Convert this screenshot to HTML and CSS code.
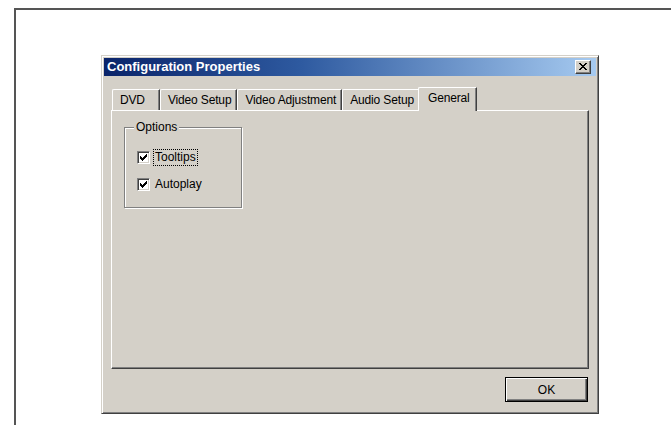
FILE: index.html
```html
<!DOCTYPE html>
<html lang="en">
<head>
<meta charset="utf-8">
<title>Configuration Properties</title>
<link rel="stylesheet" href="styles.css">
</head>
<body>
<div class="frame">
  <div class="dialog">
    <div class="titlebar">
      <span class="title">Configuration Properties</span>
      <button class="close" type="button" aria-label="Close">
        <svg width="8" height="7" viewBox="0 0 8 7" shape-rendering="crispEdges">
          <path fill="#000" d="M0 0h2v1H0z M6 0h2v1H6z M1 1h2v1H1z M5 1h2v1H5z M2 2h4v1H2z M3 3h2v1H3z M2 4h4v1H2z M1 5h2v1H1z M5 5h2v1H5z M0 6h2v1H0z M6 6h2v1H6z"/>
        </svg>
      </button>
    </div>

    <div class="tabs">
      <div class="tab tab-wide">DVD</div>
      <div class="tab">Video Setup</div>
      <div class="tab">Video Adjustment</div>
      <div class="tab">Audio Setup</div>
      <div class="tab tab-active">General</div>
    </div>

    <div class="panel">
      <div class="group">
        <span class="group-title">Options</span>
        <label class="option">
          <span class="check">
            <svg width="7" height="7" viewBox="0 0 7 7" shape-rendering="crispEdges">
              <path fill="#000" d="M6 0h1v1H6z M5 1h2v1H5z M0 2h1v1H0z M4 2h3v1H4z M0 3h2v1H0z M3 3h3v1H3z M0 4h5v1H0z M1 5h3v1H1z M2 6h1v1H2z"/>
            </svg>
          </span>
          <span class="option-text focused">Tooltips</span>
        </label>
        <label class="option">
          <span class="check">
            <svg width="7" height="7" viewBox="0 0 7 7" shape-rendering="crispEdges">
              <path fill="#000" d="M6 0h1v1H6z M5 1h2v1H5z M0 2h1v1H0z M4 2h3v1H4z M0 3h2v1H0z M3 3h3v1H3z M0 4h5v1H0z M1 5h3v1H1z M2 6h1v1H2z"/>
            </svg>
          </span>
          <span class="option-text">Autoplay</span>
        </label>
      </div>
    </div>

    <div class="actions">
      <button class="btn btn-default" type="button">OK</button>
    </div>
  </div>
</div>
</body>
</html>
```

FILE: styles.css
```css
html, body {
  margin: 0;
  height: 100%;
  background: #fff;
  overflow: hidden;
}

body {
  font-family: "Liberation Sans", Arial, sans-serif;
  font-size: 12px;
  color: #000;
}

.frame {
  margin: 8px 0 0 14px;
  height: calc(100% - 8px);
  box-sizing: border-box;
  border-top: 2px solid #555;
  border-left: 2px solid #555;
  padding: 45px 0 0 85px;
}

/* classic 3D dialog window */
.dialog {
  width: 498px;
  height: 359px;
  box-sizing: border-box;
  background: #d4d0c8;
  border: 1px solid;
  border-color: #d4d0c8 #404040 #404040 #d4d0c8;
  box-shadow: inset 1px 1px #fff, inset -1px -1px #808080;
  padding: 2px;
  display: flex;
  flex-direction: column;
}

.titlebar {
  height: 18px;
  flex: none;
  display: flex;
  align-items: center;
  justify-content: space-between;
  padding: 0 5px 0 3px;
  background: linear-gradient(to right, #0a246a 0%, #2e5aa0 40%, #a6caf0 100%);
}

.title {
  color: #fff;
  font-weight: bold;
  font-size: 13px;
  line-height: 18px;
  white-space: nowrap;
}

.close {
  width: 16px;
  height: 14px;
  box-sizing: border-box;
  padding: 0;
  margin: 0;
  background: #d4d0c8;
  border: 1px solid;
  border-color: #fff #404040 #404040 #fff;
  box-shadow: inset -1px -1px #808080;
  display: flex;
  align-items: center;
  justify-content: center;
}

.close svg {
  display: block;
  margin-top: -1px;
}

/* tab strip */
.tabs {
  margin: 11px 7px 0 7px;
  padding-left: 1px;
  height: 23px;
  flex: none;
  display: flex;
  align-items: flex-end;
}

.tab {
  height: 21px;
  box-sizing: border-box;
  padding: 0 5px 0 7px;
  display: flex;
  align-items: center;
  white-space: nowrap;
  letter-spacing: -0.15px;
  border-top: 1px solid #fff;
  border-left: 1px solid #fff;
  border-right: 1px solid #404040;
  border-top-left-radius: 2px;
  box-shadow: inset -1px 0 #808080;
  background: #d4d0c8;
}

.tab-wide {
  padding-right: 14px;
}

.tab-active {
  position: relative;
  z-index: 1;
  height: 24px;
  margin: 0 -2px -1px -2px;
  padding: 0 6px 3px 9px;
}

/* tab page */
.panel {
  margin: 0 7px;
  height: 259px;
  flex: none;
  box-sizing: border-box;
  border: 1px solid;
  border-color: #fff #404040 #404040 #fff;
  box-shadow: inset -1px -1px #808080;
  padding: 16px 0 0 12px;
}

/* etched group box */
.group {
  position: relative;
  width: 118px;
  height: 81px;
  box-sizing: border-box;
  border: 1px solid #808080;
  box-shadow: inset 1px 1px #fff, 1px 1px #fff;
  padding: 21px 0 0 12px;
  display: flex;
  flex-direction: column;
  gap: 10px;
}

.group-title {
  position: absolute;
  top: -8px;
  left: 9px;
  padding: 0 2px;
  line-height: 14px;
  background: #d4d0c8;
}

.option {
  height: 17px;
  display: flex;
  align-items: center;
  gap: 3px;
}

.check {
  width: 13px;
  height: 13px;
  box-sizing: border-box;
  flex: none;
  background: #fff;
  border: 1px solid;
  border-color: #808080 #fff #fff #808080;
  box-shadow: inset 1px 1px #404040, inset -1px -1px #d4d0c8;
  display: flex;
  align-items: center;
  justify-content: center;
}

.check svg {
  display: block;
}

.option-text {
  padding: 0 1px;
  line-height: 15px;
  border: 1px solid transparent;
}

.option-text.focused {
  border: 1px dotted #000;
}

/* dialog buttons */
.actions {
  margin: 8px 7px 0 7px;
  display: flex;
  justify-content: flex-end;
  padding-right: 1px;
}

.btn {
  width: 83px;
  height: 25px;
  box-sizing: border-box;
  margin: 0;
  padding: 0;
  font-family: "Liberation Sans", Arial, sans-serif;
  font-size: 12px;
  color: #000;
  background: #d4d0c8;
  border: 1px solid;
  border-color: #fff #404040 #404040 #fff;
  box-shadow: inset -1px -1px #808080;
}

.btn-default {
  border: 1px solid #000;
  box-shadow: inset 1px 1px #fff, inset -1px -1px #404040, inset -2px -2px #808080;
}
```
